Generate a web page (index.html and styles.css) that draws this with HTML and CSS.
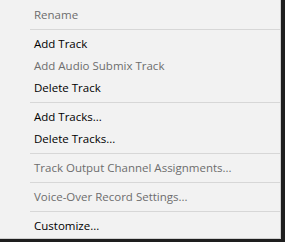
FILE: index.html
```html
<!DOCTYPE html>
<html lang="en">
  <head>
    <meta charset="UTF-8" />
    <meta name="viewport" content="width=device-width, initial-scale=1.0" />
    <title>Track Menu</title>
    <link rel="stylesheet" href="styles.css">
  </head>
  <body>
    <div class="menu">
      <div class="item disabled">Rename</div>
      <div class="sep"></div>
      <div class="item">Add Track</div>
      <div class="item disabled">Add Audio Submix Track</div>
      <div class="item">Delete Track</div>
      <div class="sep"></div>
      <div class="item">Add Tracks...</div>
      <div class="item">Delete Tracks...</div>
      <div class="sep"></div>
      <div class="item disabled">Track Output Channel Assignments...</div>
      <div class="sep"></div>
      <div class="item disabled">Voice-Over Record Settings...</div>
      <div class="sep"></div>
      <div class="item">Customize...</div>
    </div>
  </body>
</html>
```

FILE: styles.css
```css
body {
  margin: 0;
  background-color: #1e1e1e;
  font-family: "Open Sans", "Noto Sans", sans-serif;
  font-size: 11.5px;
}

.menu {
  width: 281px;
  height: 239px;
  box-sizing: border-box;
  padding-top: 4px;
  background-color: #f2f2f2;
  border-right: 1px solid #cfcfcf;
  border-bottom: 1px solid #cfcfcf;
}

.item {
  height: 22px;
  line-height: 22px;
  padding-left: 34px;
  color: #000;
  white-space: nowrap;
}

.item.disabled {
  color: #6d6d6d;
}

.sep {
  height: 7px;
  box-sizing: border-box;
  padding-top: 3px;
  margin-left: 30px;
}

.sep::after {
  content: "";
  display: block;
  height: 1px;
  background-color: #d7d7d7;
}
```
